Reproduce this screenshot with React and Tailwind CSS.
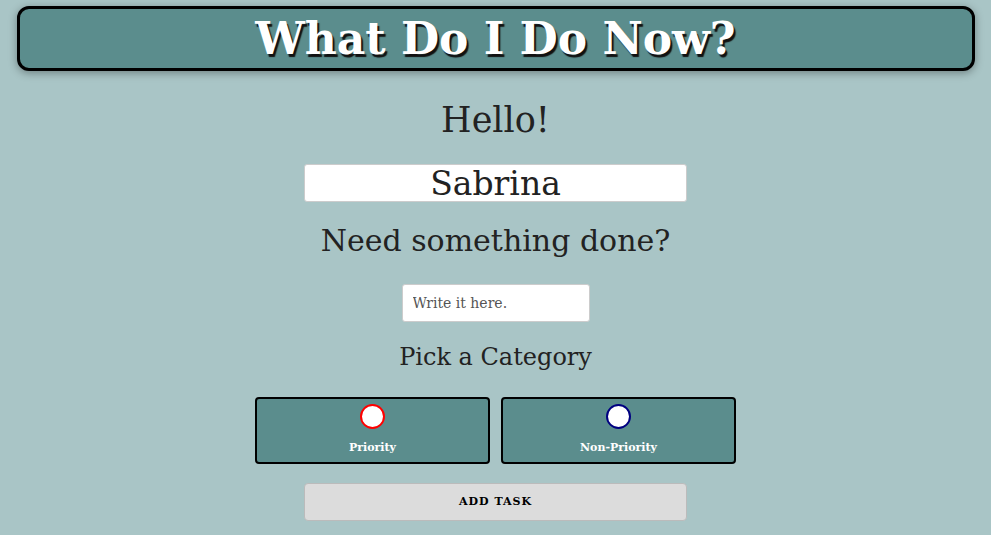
export default function App() {
  return (
    <div
      className="min-h-[535px] bg-[#a9c5c6] pt-[6px] flex flex-col items-center text-[#222]"
      style={{ fontFamily: 'Georgia, "DejaVu Serif", serif' }}
    >
      <div className="w-[958px] h-[65px] bg-[#5b8d8d] border-[3px] border-black rounded-[12px] shadow-[0_2px_8px_rgba(0,0,0,0.35)] flex items-center justify-center">
        <h1 className="text-white font-bold text-[44px] leading-none [text-shadow:2px_3px_1px_#111]">
          What Do I Do Now?
        </h1>
      </div>

      <h2 className="mt-[26px] text-[35px] leading-[46px]">Hello!</h2>

      <input
        defaultValue="Sabrina"
        className="mt-[21px] w-[383px] h-[38px] bg-white border border-[#ccc] rounded-[3px] text-center text-[33px] leading-none text-[#222] outline-none"
      />

      <h2 className="mt-[18px] text-[30px] leading-[42px]">Need something done?</h2>

      <input
        placeholder="Write it here."
        className="mt-[22px] w-[188px] h-[38px] bg-white border border-[#ccc] rounded-[3px] px-[10px] text-[14px] placeholder:text-[#555] outline-none"
      />

      <h3 className="mt-[17px] text-[24px] leading-[36px]">Pick a Category</h3>

      <div className="mt-[22px] flex gap-[11px]">
        {[
          { label: "Priority", ring: "border-[#ff0000]" },
          { label: "Non-Priority", ring: "border-[#000080]" },
        ].map((c) => (
          <label
            key={c.label}
            className="w-[235px] h-[67px] bg-[#5b8d8d] border-2 border-black rounded-[4px] flex flex-col items-center pt-[5px]"
          >
            <span className={"w-[25px] h-[25px] rounded-full bg-white border-2 " + c.ring} />
            <span className="mt-[11px] text-white font-bold text-[11px]">{c.label}</span>
          </label>
        ))}
      </div>

      <button className="mt-[19px] w-[383px] h-[38px] bg-[#dcdcdc] border border-[#bbb] rounded-[4px] text-[11px] font-bold tracking-[1px] text-black">
        ADD TASK
      </button>
    </div>
  );
}
